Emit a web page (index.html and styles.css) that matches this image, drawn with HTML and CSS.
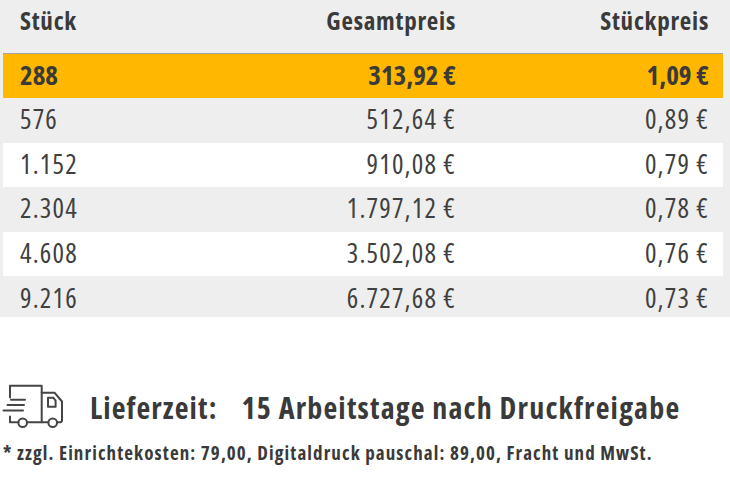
FILE: index.html
```html
<!DOCTYPE html>
<html lang="de">
<head>
<meta charset="utf-8">
<title>Preisstaffel</title>
<link rel="stylesheet" href="styles.css">
</head>
<body>
<div class="price-area">
  <div class="price-table">
    <div class="row head">
      <div class="cell c1">Stück</div>
      <div class="cell c2">Gesamtpreis</div>
      <div class="cell c3">Stückpreis</div>
    </div>
    <div class="row active">
      <div class="cell c1">288</div>
      <div class="cell c2">313,92 €</div>
      <div class="cell c3">1,09 €</div>
    </div>
    <div class="row odd">
      <div class="cell c1">576</div>
      <div class="cell c2">512,64 €</div>
      <div class="cell c3">0,89 €</div>
    </div>
    <div class="row even">
      <div class="cell c1">1.152</div>
      <div class="cell c2">910,08 €</div>
      <div class="cell c3">0,79 €</div>
    </div>
    <div class="row odd">
      <div class="cell c1">2.304</div>
      <div class="cell c2">1.797,12 €</div>
      <div class="cell c3">0,78 €</div>
    </div>
    <div class="row even">
      <div class="cell c1">4.608</div>
      <div class="cell c2">3.502,08 €</div>
      <div class="cell c3">0,76 €</div>
    </div>
    <div class="row odd">
      <div class="cell c1">9.216</div>
      <div class="cell c2">6.727,68 €</div>
      <div class="cell c3">0,73 €</div>
    </div>
  </div>
</div>

<div class="delivery">
  <svg class="truck" viewBox="0 0 64 48" width="64" height="48" aria-hidden="true">
    <g fill="none" stroke="#454545" stroke-width="2" stroke-linecap="round" stroke-linejoin="round">
      <path d="M10 17.5 V5.7 H41.7 V42.2"/>
      <path d="M41.7 12.7 H54.5 L62 21.5 V40.2 Q62 42.2 60 42.2 H57.2"/>
      <path d="M48 17.7 H53.2 L55.6 20.6 V26.8 H48 Z"/>
      <path d="M11 19.7 H25"/>
      <path d="M7.5 24.9 H24"/>
      <path d="M3.5 30.6 H23"/>
      <path d="M10 36.5 V42.2 H18.3"/>
      <path d="M27 42.2 H48.2"/>
      <circle cx="22.7" cy="42.7" r="4.3"/>
      <circle cx="52.7" cy="42.7" r="4.3"/>
    </g>
  </svg>
  <span class="lbl">Lieferzeit:</span>
  <span class="val">15 Arbeitstage nach Druckfreigabe</span>
</div>
<p class="note">* zzgl. Einrichtekosten: 79,00, Digitaldruck pauschal: 89,00, Fracht und MwSt.</p>
</body>
</html>
```
FILE: styles.css
```css
html, body {
  margin: 0;
  padding: 0;
  background: #ffffff;
}
body {
  font-family: "Open Sans", "Noto Sans", sans-serif;
  font-stretch: 87%;
  color: #3a3a3a;
  width: 730px;
  height: 485px;
  overflow: hidden;
}
.price-area {
  background: #eeeeee;
  height: 317px;
  overflow: hidden;
  padding-left: 3px;
}
.price-table {
  width: 720px;
}
.row {
  display: grid;
  grid-template-columns: 200px 235px 253px;
  padding: 0 15px 3px 17px;
  box-sizing: border-box;
  align-items: center;
  height: 44.6px;
  font-size: 27px;
  letter-spacing: 1.2px;
  color: #404040;
}
.row.head {
  height: 54px;
  align-items: start;
  font-size: 25px;
  font-weight: 700;
  letter-spacing: 0.75px;
  color: #3a3a3a;
  border-bottom: 1px solid #a4a4a4;
  padding-top: 3px;
  padding-bottom: 0;
  line-height: 34px;
}
.row.active {
  background: #ffb700;
  font-weight: 700;
  letter-spacing: 0;
  color: #3a3a3a;
  height: 44px;
}
.row.odd {
  background: #eeeeee;
}
.row.even {
  background: #ffffff;
}
.cell {
  white-space: nowrap;
}
.c2, .c3 {
  text-align: right;
  margin-right: -1px;
}
.delivery {
  display: flex;
  align-items: center;
  margin-top: 63px;
  height: 48px;
}
.truck {
  flex: none;
  display: block;
}
.lbl, .val {
  font-size: 30px;
  font-weight: 700;
  letter-spacing: 1.1px;
  padding-top: 7px;
  white-space: nowrap;
}
.lbl {
  margin-left: 26px;
}
.val {
  margin-left: 24px;
  letter-spacing: 1.2px;
}
.note {
  margin: 12px 0 0 3px;
  font-size: 19px;
  font-weight: 700;
  letter-spacing: 1.1px;
  white-space: nowrap;
}
```
